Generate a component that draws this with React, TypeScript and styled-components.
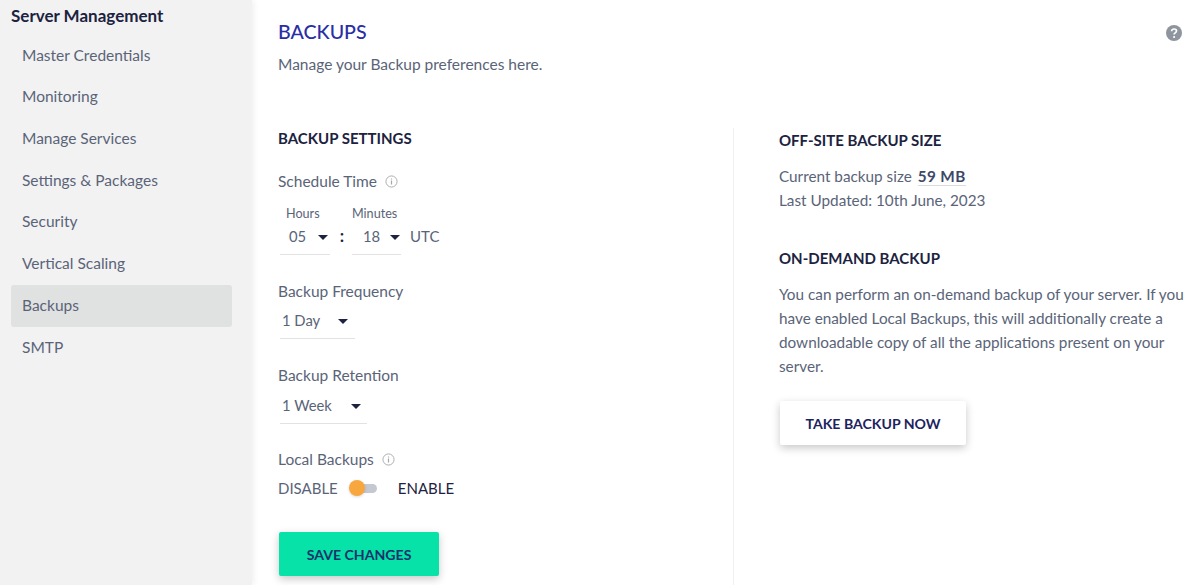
import React from "react";
import styled, {createGlobalStyle} from "styled-components";

const GlobalStyle = createGlobalStyle`
  html, body {
    margin: 0;
    height: 585px;
    overflow: hidden;
    background: #fff;
    font-family: "Lato", "Liberation Sans", sans-serif;
  }
`;

const Page = styled.div`
  display: flex;
  width: 1200px;
  height: 585px;
  overflow: hidden;
`;

const Sidebar = styled.nav`
  flex: 0 0 252px;
  box-sizing: border-box;
  padding: 5px 20px 0 11px;
  background: #f2f2f2;
  box-shadow: 2px 0 6px rgba(0, 0, 0, 0.06);
`;

const SideTitle = styled.div`
  height: 21px;
  line-height: 21px;
  font-size: 17px;
  font-weight: 700;
  color: #1c2340;
  margin-bottom: 8.7px;
`;

const SideItem = styled.div<{$active?: boolean}>`
  height: 41.7px;
  line-height: 41.7px;
  padding-left: 11px;
  font-size: 15.5px;
  color: #5a6478;
  border-radius: 3px;
  background: ${props => (props.$active ? "#e0e1e1" : "transparent")};
`;

const Main = styled.main`
  flex: 1;
  min-width: 0;
  box-sizing: border-box;
  padding: 21px 18px 0 26px;
`;

const TopRow = styled.div`
  display: flex;
  justify-content: space-between;
  align-items: flex-start;
`;

const PageTitle = styled.h1`
  margin: 0;
  font-size: 19.6px;
  line-height: 22px;
  font-weight: 500;
  color: #2a2ea5;
`;

const HelpIcon = styled.svg`
  width: 16px;
  height: 16px;
  margin-top: 4px;
`;

const Subtitle = styled.p`
  margin: 12px 0 0;
  font-size: 15.5px;
  line-height: 18px;
  color: #5a6478;
`;

const Columns = styled.div`
  display: flex;
  margin-top: 55px;
  height: 460px;
`;

const LeftColumn = styled.section`
  flex: 0 0 455px;
  border-right: 1px solid #f0f0f0;
  padding-top: 1px;
`;

const RightColumn = styled.section`
  flex: 1;
  padding: 3px 0 0 45px;
`;

const SectionTitle = styled.h2<{$gap?: number}>`
  margin: ${props => props.$gap || 0}px 0 0;
  font-size: 15px;
  line-height: 18px;
  font-weight: 700;
  color: #1c2340;
`;

const FieldLabel = styled.div<{$gap: number}>`
  display: flex;
  align-items: center;
  gap: 8px;
  margin-top: ${props => props.$gap}px;
  font-size: 15.5px;
  line-height: 18px;
  color: #5a6478;
`;

const InfoIcon = styled.svg`
  width: 13px;
  height: 13px;
`;

const TimeRow = styled.div`
  display: flex;
  align-items: flex-start;
  margin-top: 16px;
`;

const TimePart = styled.div<{$width: number}>`
  width: ${props => props.$width}px;
  font-size: 12.6px;
  line-height: 15px;
  color: #5a6478;
`;

const TimeCaption = styled.div<{$pad: number}>`
  padding-left: ${props => props.$pad}px;
`;

const Select = styled.div<{$width: number; $arrow: number; $pad: number; $top?: number}>`
  position: relative;
  box-sizing: border-box;
  width: ${props => props.$width}px;
  height: 34px;
  line-height: 31px;
  margin: ${props => props.$top || 0}px 0 0 2px;
  padding-left: ${props => props.$pad}px;
  font-size: 14.8px;
  color: #5a6478;
  border-bottom: 1px solid #e2e2e2;

  &::after {
    content: "";
    position: absolute;
    left: ${props => props.$arrow}px;
    top: 14px;
    border-left: 5px solid transparent;
    border-right: 5px solid transparent;
    border-top: 5px solid #1c2340;
  }
`;

const Colon = styled.div`
  width: 16px;
  margin-top: 15px;
  text-align: center;
  font-size: 17px;
  line-height: 30px;
  font-weight: 700;
  color: #1c2340;
`;

const Utc = styled.div`
  margin: 15px 0 0 9px;
  font-size: 15px;
  line-height: 31px;
  color: #5a6478;
`;

const ToggleRow = styled.div`
  display: flex;
  align-items: center;
  margin-top: 10px;
  height: 20px;
  font-size: 15px;
  color: #5a6478;
`;

const ToggleTrack = styled.div`
  position: relative;
  width: 24px;
  height: 9px;
  margin: 0 21px 0 15px;
  border-radius: 5px;
  background: #c4c8d0;
`;

const ToggleKnob = styled.div`
  position: absolute;
  left: -4px;
  top: -4px;
  width: 16px;
  height: 16px;
  border-radius: 50%;
  background: #f8a73f;
  box-shadow: 0 1px 3px rgba(0, 0, 0, 0.15);
`;

const EnableText = styled.span`
  color: #1c2340;
`;

const ActionButton = styled.button<{$primary?: boolean; $width: number; $top: number}>`
  display: block;
  box-sizing: border-box;
  width: ${props => props.$width}px;
  height: 44px;
  margin: ${props => props.$top}px 0 0 1px;
  border: 0;
  border-radius: 2px;
  font-family: inherit;
  font-size: 14.1px;
  font-weight: 700;
  color: ${props => (props.$primary ? "#14326b" : "#1c2360")};
  background: ${props => (props.$primary ? "#07e3a8" : "#fff")};
  box-shadow: 0 3px 8px rgba(0, 0, 0, 0.22);
`;

const BodyText = styled.p<{$top: number}>`
  margin: ${props => props.$top}px 0 0;
  font-size: 15.3px;
  line-height: 24px;
  color: #5a6478;
  white-space: nowrap;
`;

const SizeValue = styled.strong`
  margin-left: 2px;
  font-weight: 700;
  letter-spacing: 0.4px;
  color: #3d4868;
  border-bottom: 1px solid #dcdcdc;
`;

const Info = () => (
    <InfoIcon viewBox="0 0 14 14" fill="none" stroke="#a8a8a8">
        <circle cx="7" cy="7" r="6"/>
        <path d="M7 6v4.2M7 3.7v1.2" strokeWidth="1.3"/>
    </InfoIcon>
);

const sideItems = ["Master Credentials", "Monitoring", "Manage Services", "Settings & Packages", "Security", "Vertical Scaling", "Backups", "SMTP"];

const App = () => {
    return (
        <Page>
            <GlobalStyle/>
            <Sidebar>
                <SideTitle>Server Management</SideTitle>
                {sideItems.map(item => (
                    <SideItem key={item} $active={item === "Backups"}>{item}</SideItem>
                ))}
            </Sidebar>
            <Main>
                <TopRow>
                    <PageTitle>BACKUPS</PageTitle>
                    <HelpIcon viewBox="0 0 16 16">
                        <circle cx="8" cy="8" r="8" fill="#8f959f"/>
                        <path d="M5.6 6.2c0-1.4 1.1-2.2 2.5-2.2s2.4.8 2.4 2c0 1.9-2.4 1.8-2.4 3.4" fill="none" stroke="#fff" strokeWidth="1.7"/>
                        <circle cx="8.1" cy="12" r="1.1" fill="#fff"/>
                    </HelpIcon>
                </TopRow>
                <Subtitle>Manage your Backup preferences here.</Subtitle>
                <Columns>
                    <LeftColumn>
                        <SectionTitle>BACKUP SETTINGS</SectionTitle>
                        <FieldLabel $gap={25}>Schedule Time <Info/></FieldLabel>
                        <TimeRow>
                            <TimePart $width={56}>
                                <TimeCaption $pad={8}>Hours</TimeCaption>
                                <Select $width={50} $arrow={38} $pad={9}>05</Select>
                            </TimePart>
                            <Colon>:</Colon>
                            <TimePart $width={51}>
                                <TimeCaption $pad={2}>Minutes</TimeCaption>
                                <Select $width={49} $arrow={38} $pad={11}>18</Select>
                            </TimePart>
                            <Utc>UTC</Utc>
                        </TimeRow>
                        <FieldLabel $gap={27}>Backup Frequency</FieldLabel>
                        <Select $width={75} $arrow={58} $pad={2} $top={5}>1 Day</Select>
                        <FieldLabel $gap={27}>Backup Retention</FieldLabel>
                        <Select $width={87} $arrow={71} $pad={2} $top={6}>1 Week</Select>
                        <FieldLabel $gap={26}>Local Backups <Info/></FieldLabel>
                        <ToggleRow>
                            DISABLE
                            <ToggleTrack><ToggleKnob/></ToggleTrack>
                            <EnableText>ENABLE</EnableText>
                        </ToggleRow>
                        <ActionButton $primary $width={160} $top={34}>SAVE CHANGES</ActionButton>
                    </LeftColumn>
                    <RightColumn>
                        <SectionTitle>OFF-SITE BACKUP SIZE</SectionTitle>
                        <BodyText $top={15}>Current backup size <SizeValue>59 MB</SizeValue><br/>Last Updated: 10th June, 2023</BodyText>
                        <SectionTitle $gap={37}>ON-DEMAND BACKUP</SectionTitle>
                        <BodyText $top={15}>
                            You can perform an on-demand backup of your server. If you<br/>
                            have enabled Local Backups, this will additionally create a<br/>
                            downloadable copy of all the applications present on your<br/>
                            server.
                        </BodyText>
                        <ActionButton $width={186} $top={23}>TAKE BACKUP NOW</ActionButton>
                    </RightColumn>
                </Columns>
            </Main>
        </Page>
    );
};

export default App;
